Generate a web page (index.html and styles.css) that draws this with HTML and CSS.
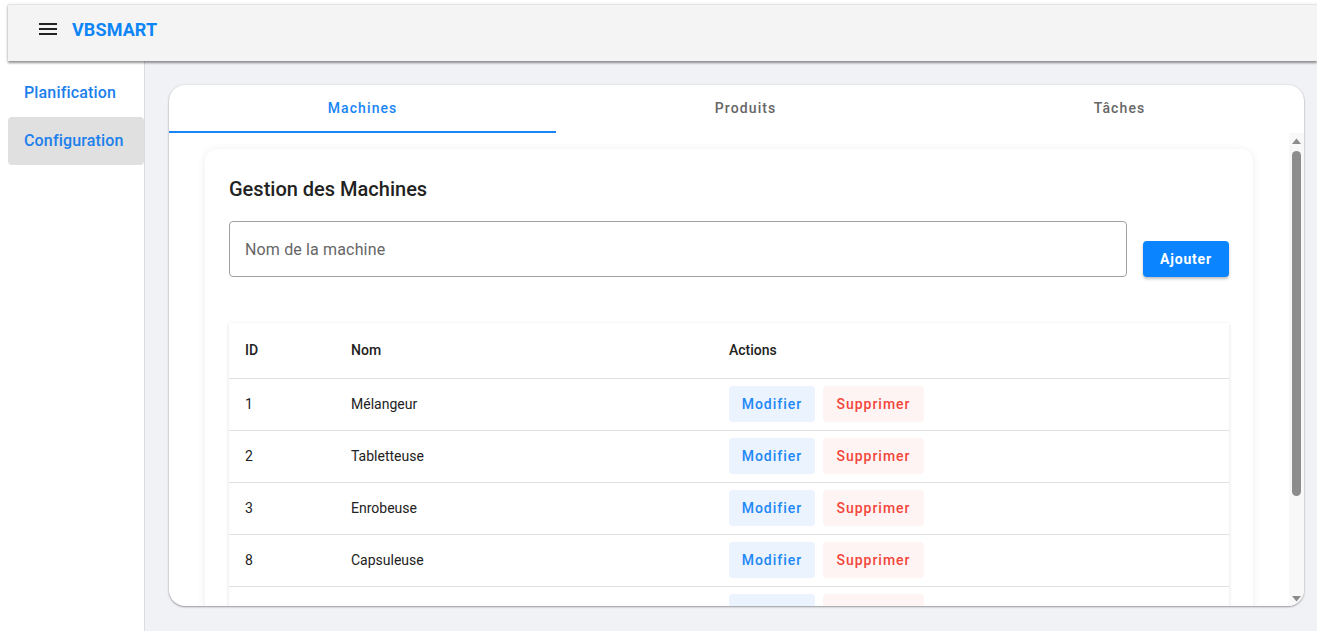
FILE: index.html
```html
<!DOCTYPE html>
<html lang="fr">
<head>
<meta charset="utf-8">
<title>VBSMART</title>
<link rel="stylesheet" href="styles.css">
</head>
<body>
<div class="root">
  <header class="appbar">
    <button class="menu-btn" aria-label="menu">
      <svg width="18" height="12" viewBox="0 0 18 12"><rect x="0" y="0" width="18" height="2" fill="#222"/><rect x="0" y="5" width="18" height="2" fill="#222"/><rect x="0" y="10" width="18" height="2" fill="#222"/></svg>
    </button>
    <span class="brand">VBSMART</span>
  </header>
  <div class="body">
    <nav class="sidebar">
      <a class="nav-item">Planification</a>
      <a class="nav-item active">Configuration</a>
    </nav>
    <main class="main">
      <section class="card">
        <div class="tabs">
          <div class="tab active">Machines</div>
          <div class="tab">Produits</div>
          <div class="tab">Tâches</div>
        </div>
        <div class="scroll-area">
          <div class="scroll">
            <div class="panel">
              <h2 class="title">Gestion des Machines</h2>
              <div class="form">
                <div class="input">Nom de la machine</div>
                <button class="btn-primary">Ajouter</button>
              </div>
              <table class="table">
                <thead>
                  <tr><th class="c-id">ID</th><th class="c-nom">Nom</th><th>Actions</th></tr>
                </thead>
                <tbody>
                  <tr><td>1</td><td>Mélangeur</td><td><div class="actions"><button class="btn-edit">Modifier</button><button class="btn-del">Supprimer</button></div></td></tr>
                  <tr><td>2</td><td>Tabletteuse</td><td><div class="actions"><button class="btn-edit">Modifier</button><button class="btn-del">Supprimer</button></div></td></tr>
                  <tr><td>3</td><td>Enrobeuse</td><td><div class="actions"><button class="btn-edit">Modifier</button><button class="btn-del">Supprimer</button></div></td></tr>
                  <tr><td>8</td><td>Capsuleuse</td><td><div class="actions"><button class="btn-edit">Modifier</button><button class="btn-del">Supprimer</button></div></td></tr>
                  <tr><td>9</td><td>Géluleuse</td><td><div class="actions"><button class="btn-edit">Modifier</button><button class="btn-del">Supprimer</button></div></td></tr>
                </tbody>
              </table>
            </div>
          </div>
          <div class="scrollbar" aria-hidden="true">
            <div class="sb-arrow"><svg width="9" height="6" viewBox="0 0 9 6"><polygon points="0,6 4.5,0.5 9,6" fill="#8c8c8c"/></svg></div>
            <div class="sb-track"><div class="sb-thumb"></div></div>
            <div class="sb-arrow"><svg width="9" height="6" viewBox="0 0 9 6"><polygon points="0,0 4.5,5.5 9,0" fill="#8c8c8c"/></svg></div>
          </div>
        </div>
      </section>
    </main>
  </div>
</div>
</body>
</html>
```

FILE: styles.css
```css
* { box-sizing: border-box; }
html, body { margin: 0; padding: 0; height: 100%; overflow: hidden; }
body {
  font-family: Roboto, "Noto Sans", "Liberation Sans", sans-serif;
  background: #ffffff;
  color: #222;
}
.root {
  padding: 4px 0 0 8px;
  height: 100%;
  display: flex;
  flex-direction: column;
}
.appbar {
  height: 57px;
  flex: none;
  background: #f4f4f4;
  display: flex;
  align-items: center;
  padding-left: 31px;
  padding-bottom: 8px;
  position: relative;
  z-index: 2;
  border-top: 1px solid #e4e4e4;
  box-shadow: 0 2px 2px rgba(0,0,0,0.35), 0 1px 4px rgba(0,0,0,0.15);
}
.menu-btn {
  border: 0;
  background: transparent;
  padding: 0;
  width: 18px;
  height: 12px;
  display: flex;
}
.brand {
  margin-left: 15px;
  font-size: 18px;
  font-weight: 700;
  color: #0d85f7;
  letter-spacing: 0.1px;
}
.body {
  flex: 1;
  display: flex;
  min-height: 0;
}
.sidebar {
  width: 137px;
  flex: none;
  background: #fff;
  border-right: 1px solid #dcdcdc;
  padding-top: 8px;
  display: flex;
  flex-direction: column;
}
.nav-item {
  height: 48px;
  display: flex;
  align-items: center;
  padding-left: 16px;
  padding-bottom: 2px;
  font-size: 16px;
  font-weight: 500;
  color: #1c7fec;
  border-radius: 4px;
  letter-spacing: 0.15px;
}
.nav-item.active { background: #e0e0e0; }
.main {
  flex: 1;
  background: #f1f2f6;
  padding: 24px 13px 25px 24px;
  min-width: 0;
}
.card {
  height: 100%;
  background: #fff;
  border-radius: 16px;
  box-shadow: 0 1px 2px rgba(0,0,0,0.35), 0 0 3px rgba(0,0,0,0.08);
  display: flex;
  flex-direction: column;
  overflow: hidden;
}
.tabs {
  display: flex;
  height: 48px;
  flex: none;
}
.tab {
  flex: 1 1 auto;
  display: flex;
  align-items: center;
  justify-content: center;
  font-size: 14px;
  font-weight: 500;
  letter-spacing: 1.1px;
  color: #666;
  border-bottom: 2px solid transparent;
}
.tab.active {
  color: #1a85f5;
  border-bottom-color: #1a85f5;
}
.scroll-area {
  flex: 1;
  display: flex;
  min-height: 0;
}
.scroll {
  flex: 1;
  min-width: 0;
  overflow: hidden;
  padding: 16px 36px 16px 36px;
}
.scrollbar {
  width: 15px;
  flex: none;
  background: #f8f8f8;
  display: flex;
  flex-direction: column;
}
.sb-arrow {
  height: 15px;
  flex: none;
  display: flex;
  align-items: center;
  justify-content: center;
}
.sb-track {
  flex: 1;
  padding: 3px 3px;
}
.sb-thumb {
  height: 345px;
  background: #8c8c8c;
  border-radius: 5px;
}
.panel {
  background: #fff;
  border-radius: 12px;
  box-shadow: 0 1px 8px rgba(0,0,0,0.08);
  padding: 24px;
}
.title {
  margin: 0;
  font-size: 20px;
  line-height: 32px;
  font-weight: 500;
  color: #222;
}
.form {
  margin-top: 16px;
  display: flex;
  align-items: flex-end;
  gap: 16px;
}
.input {
  flex: 1;
  height: 56px;
  border: 1px solid #a0a0a0;
  border-radius: 4px;
  display: flex;
  align-items: center;
  padding-left: 15px;
  padding-top: 1px;
  font-size: 16px;
  color: #666;
  letter-spacing: 0.15px;
}
.btn-primary {
  width: 86px;
  height: 36px;
  border: 0;
  border-radius: 4px;
  background: #0a84ff;
  color: #fff;
  font-family: inherit;
  font-size: 14px;
  font-weight: 700;
  letter-spacing: 0.8px;
  box-shadow: 0 2px 3px rgba(0,0,0,0.25);
}
.table {
  margin-top: 46px;
  width: 100%;
  border-collapse: collapse;
  font-size: 14px;
  box-shadow: 0 1px 4px rgba(0,0,0,0.12);
  table-layout: fixed;
}
.table th, .table td {
  text-align: left;
  padding: 0 16px;
  border-bottom: 1px solid #e0e0e0;
}
.table th {
  height: 55px;
  font-weight: 500;
  color: #222;
}
.table td {
  height: 52px;
  color: #222;
}
.c-id { width: 106px; }
.c-nom { width: 378px; }
.actions {
  display: flex;
  gap: 8px;
}
.btn-edit, .btn-del {
  height: 36px;
  border: 0;
  border-radius: 4px;
  font-family: inherit;
  font-size: 14px;
  font-weight: 500;
  letter-spacing: 1px;
  padding: 0 8px;
}
.btn-edit { background: #ebf3ff; color: #1e88f5; width: 86px; }
.btn-del { background: #fff4f4; color: #f2463b; width: 101px; }
```
